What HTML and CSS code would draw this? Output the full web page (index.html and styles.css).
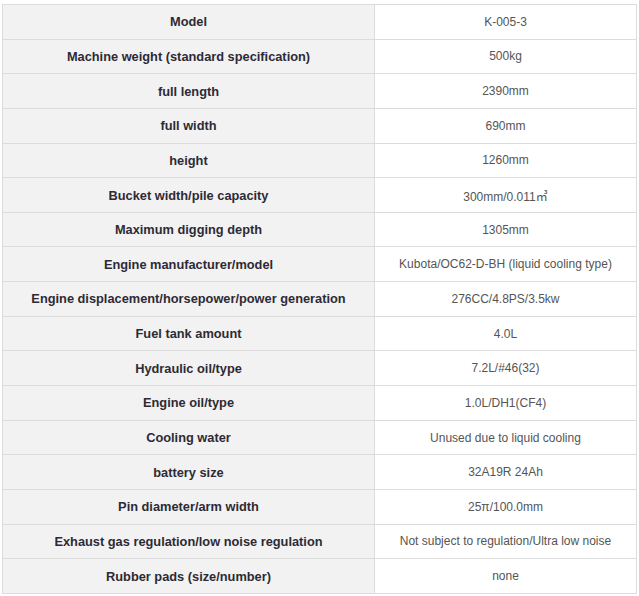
FILE: index.html
```html
<!DOCTYPE html>
<html lang="en">
<head>
<meta charset="utf-8">
<title>Spec</title>
<link rel="stylesheet" href="styles.css">
</head>
<body>
<table class="spec">
<tbody>
<tr><th>Model</th><td>K-005-3</td></tr>
<tr><th>Machine weight (standard specification)</th><td>500kg</td></tr>
<tr><th>full length</th><td>2390mm</td></tr>
<tr><th>full width</th><td>690mm</td></tr>
<tr><th>height</th><td>1260mm</td></tr>
<tr><th>Bucket width/pile capacity</th><td>300mm/0.011㎥</td></tr>
<tr><th>Maximum digging depth</th><td>1305mm</td></tr>
<tr><th>Engine manufacturer/model</th><td>Kubota/OC62-D-BH (liquid cooling type)</td></tr>
<tr><th>Engine displacement/horsepower/power generation</th><td>276CC/4.8PS/3.5kw</td></tr>
<tr><th>Fuel tank amount</th><td>4.0L</td></tr>
<tr><th>Hydraulic oil/type</th><td>7.2L/#46(32)</td></tr>
<tr><th>Engine oil/type</th><td>1.0L/DH1(CF4)</td></tr>
<tr><th>Cooling water</th><td>Unused due to liquid cooling</td></tr>
<tr><th>battery size</th><td>32A19R 24Ah</td></tr>
<tr><th>Pin diameter/arm width</th><td>25π/100.0mm</td></tr>
<tr><th>Exhaust gas regulation/low noise regulation</th><td>Not subject to regulation/Ultra low noise</td></tr>
<tr><th>Rubber pads (size/number)</th><td>none</td></tr>
</tbody>
</table>
</body>
</html>
```
FILE: styles.css
```css
html, body {
  margin: 0;
  padding: 0;
  background: #fff;
}
body {
  padding: 4px 2px 0 2px;
}
.spec {
  border-collapse: collapse;
  width: 635px;
  table-layout: fixed;
  font-family: "Liberation Sans", "Noto Sans CJK JP", sans-serif;
  font-size: 12px;
}
.spec th,
.spec td {
  border: 1px solid #dcdcdc;
  height: 34.65px;
  padding: 0;
  text-align: center;
  vertical-align: middle;
  box-sizing: border-box;
}
.spec th {
  width: 372px;
  background: #f2f2f2;
  color: #2e2a35;
  font-weight: bold;
  font-size: 12.8px;
}
.spec td {
  background: #fff;
  color: #555;
  font-weight: normal;
}
```
